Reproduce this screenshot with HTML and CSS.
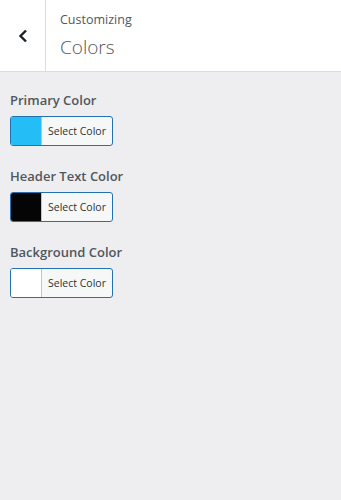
FILE: index.html
```html
<!DOCTYPE html>
<html lang="en">
<head>
  <meta charset="UTF-8">
  <meta name="viewport" content="width=device-width, initial-scale=1.0">
  <title>Customizing - Colors</title>
  <link rel="stylesheet" href="styles.css">
</head>
<body>
  <div class="header">
    <button class="back" aria-label="Back">
      <svg width="12" height="14" viewBox="0 0 12 14"><path d="M9 1.5 L3.5 7 L9 12.5" fill="none" stroke="#1d2327" stroke-width="2.4"/></svg>
    </button>
    <div class="title">
      <span class="action">Customizing</span>
      <h1>Colors</h1>
    </div>
  </div>

  <div class="controls">
    <div class="control">
      <span class="label">Primary Color</span>
      <button class="picker"><span class="swatch" style="background:#24bdf5"></span><span class="pick-text">Select Color</span></button>
    </div>
    <div class="control">
      <span class="label">Header Text Color</span>
      <button class="picker"><span class="swatch" style="background:#050505"></span><span class="pick-text">Select Color</span></button>
    </div>
    <div class="control">
      <span class="label">Background Color</span>
      <button class="picker"><span class="swatch" style="background:#ffffff"></span><span class="pick-text">Select Color</span></button>
    </div>
  </div>
</body>
</html>
```
FILE: styles.css
```css
body {
  margin: 0;
  font-family: "Open Sans", "Noto Sans", sans-serif;
  background-color: #eeeef0;
  color: #50575e;
  height: 500px;
}
.header {
  display: flex;
  height: 71px;
  background: #fff;
  border-bottom: 1px solid #dcdcde;
}
.back {
  width: 46px;
  border: none;
  border-right: 1px solid #dcdcde;
  background: #fff;
  padding: 0;
  display: flex;
  align-items: center;
  justify-content: center;
}
.title {
  padding: 11px 0 0 14px;
}
.action {
  display: block;
  font-size: 12.5px;
  line-height: 18px;
  color: #50575e;
}
h1 {
  margin: 5px 0 0;
  font-size: 19px;
  font-weight: 300;
  line-height: 26px;
  color: #50575e;
}
.controls {
  padding: 18px 10px;
}
.control {
  margin-bottom: 20px;
}
.label {
  display: block;
  font-size: 13px;
  font-weight: 600;
  line-height: 20px;
  margin-bottom: 6px;
  color: #50575e;
}
.picker {
  display: flex;
  align-items: stretch;
  width: 103px;
  height: 30px;
  padding: 0;
  border: 1px solid #2271b1;
  border-radius: 3px;
  background: #f6f7f7;
  overflow: hidden;
  font-family: inherit;
}
.swatch {
  width: 30px;
  border-right: 1px solid #c3c4c7;
}
.pick-text {
  flex: 1;
  display: flex;
  align-items: center;
  justify-content: center;
  font-size: 10.5px;
  color: #2c3338;
}
```
